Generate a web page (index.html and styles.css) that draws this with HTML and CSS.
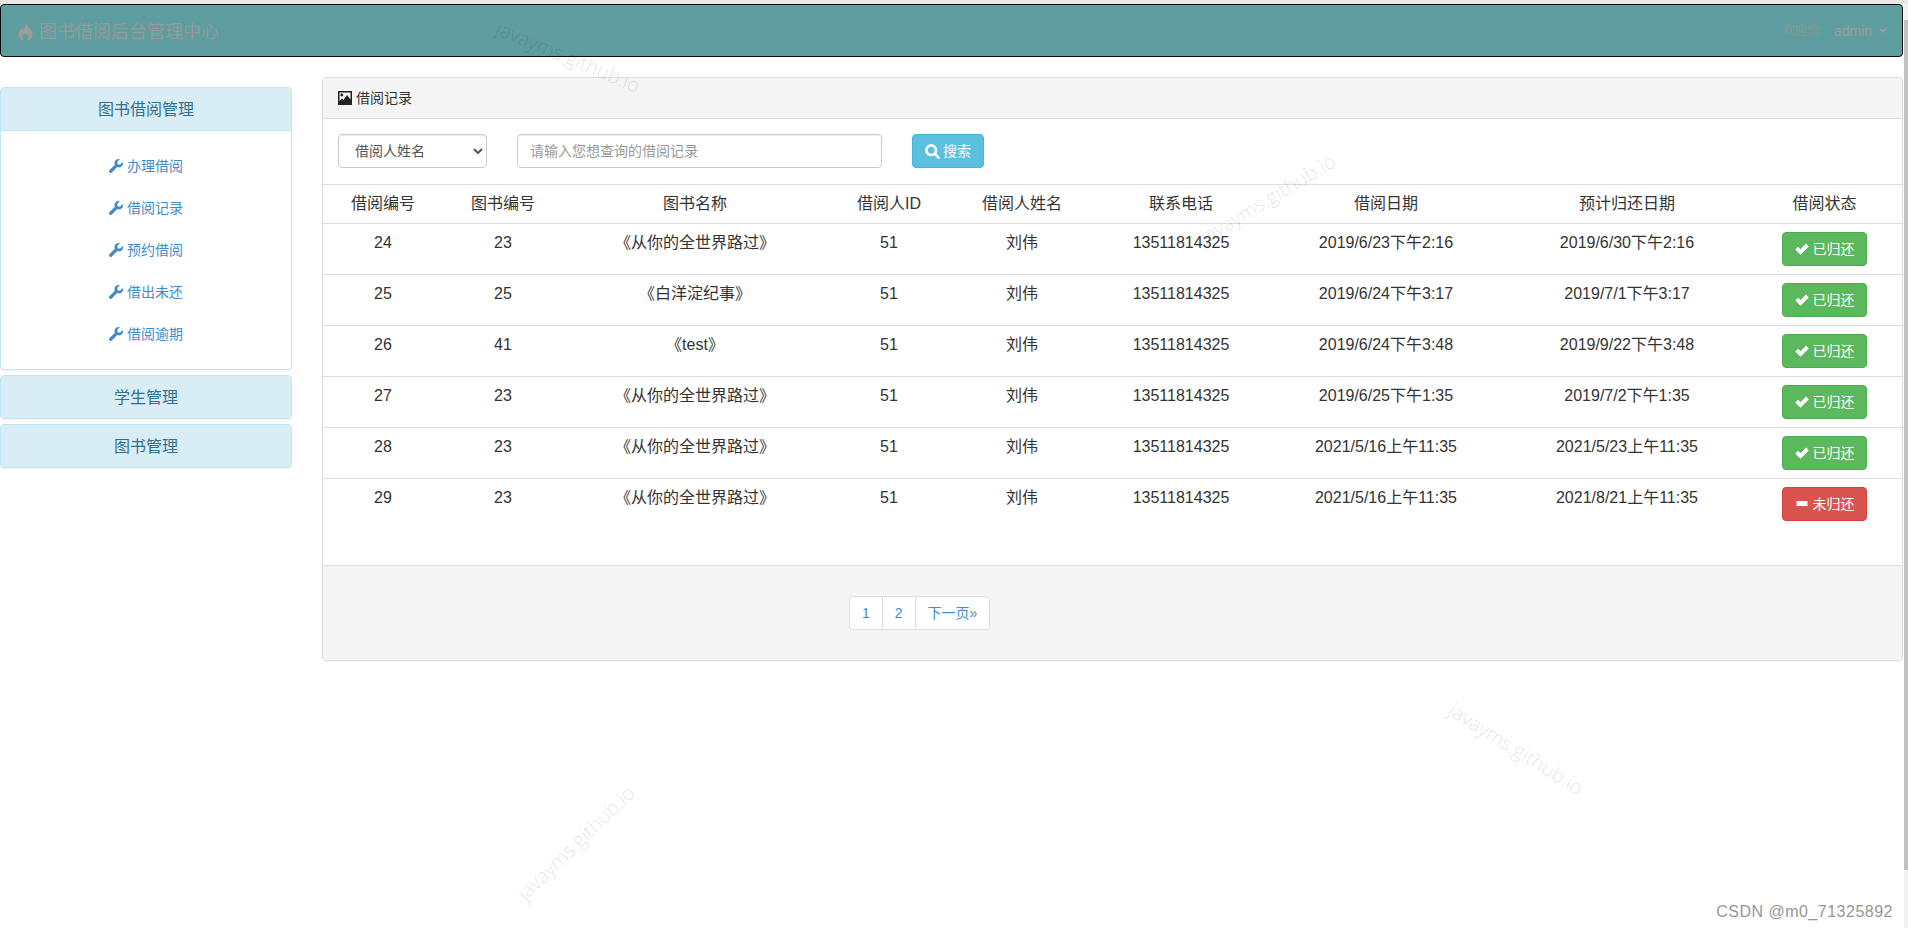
FILE: index.html
```html
<!DOCTYPE html>
<html lang="zh-CN">
<head>
<meta charset="utf-8">
<title>图书借阅后台管理中心</title>
<link rel="stylesheet" href="styles.css">
</head>
<body>
<svg class="defs" width="0" height="0" aria-hidden="true">
  <symbol id="i-wrench" viewBox="0 0 14 14"><path d="M10.9.3A4 4 0 0 0 5.9 5.8L.6 11.1a1.6 1.6 0 0 0 2.3 2.3L8.2 8.1a4 4 0 0 0 5.5-5L11.2 5.6 8.6 5.4 8.4 2.8Z"/></symbol>
  <symbol id="i-ok" viewBox="0 0 14 14"><path d="M.3 7.600 3.100 4.800 5.500 7.200 11 1.600 13.800 4.400 5.500 12.800Z"/></symbol>
  <symbol id="i-minus" viewBox="0 0 14 14"><rect x="1.500" y="4" width="11" height="5"/></symbol>
</svg>

<header class="navbar">
  <div class="brand">
    <svg class="icon-fire" viewBox="0 0 15 17"><path d="M7.500 0C8.500 3 5.800 4.400 5 6.600 4.600 5.800 4.300 5.200 4.300 4.200 2 6 .5 8.200.5 11c0 3.200 2.600 6 6 6-1.600-1-2.600-2.500-2.200-4.300.3-1.300 1.400-2.200 2-3.600.9 1.100 1 2 .9 3 .8-.5 1.100-1.300 1.200-2.100 1.500 1.800 2.200 3 1.900 4.400-.2 1.200-1 2-2 2.600 3.300 0 6.200-2.600 6.200-6 0-3-1.800-4.800-2.800-6.400-.2 1-.6 1.600-1.200 2.100C10.800 3.700 9.800 1.400 7.500 0Z"/></svg>
    <span>图书借阅后台管理中心</span>
  </div>
  <div class="user">
    <span class="welcome">欢迎您:</span>
    <span class="admin">admin</span>
    <span class="caret"></span>
  </div>
</header>

<div class="layout">
  <aside class="sidebar">
    <section class="side-panel">
      <h2 class="side-title">图书借阅管理</h2>
      <ul class="side-list">
        <li><a class="side-link" href="#"><svg class="icon-14"><use href="#i-wrench"/></svg>办理借阅</a></li>
        <li><a class="side-link" href="#"><svg class="icon-14"><use href="#i-wrench"/></svg>借阅记录</a></li>
        <li><a class="side-link" href="#"><svg class="icon-14"><use href="#i-wrench"/></svg>预约借阅</a></li>
        <li><a class="side-link" href="#"><svg class="icon-14"><use href="#i-wrench"/></svg>借出未还</a></li>
        <li><a class="side-link" href="#"><svg class="icon-14"><use href="#i-wrench"/></svg>借阅逾期</a></li>
      </ul>
    </section>
    <section class="side-panel"><h2 class="side-title side-title-solo">学生管理</h2></section>
    <section class="side-panel"><h2 class="side-title side-title-solo">图书管理</h2></section>
  </aside>

  <main class="records">
    <div class="records-head">
      <svg class="icon-picture" viewBox="0 0 14 14"><path fill-rule="evenodd" d="M0 0h14v14H0ZM1.500 1.500v8.500l2.500-2.500 1.500 1.500 3.500-5 3.500 4.500V1.500Z"/><circle cx="3.800" cy="4" r="1.400"/></svg>
      <span>借阅记录</span>
    </div>
    <form class="search-row">
      <select class="field field-select">
        <option>借阅人姓名</option>
      </select>
      <input class="field field-input" type="text" placeholder="请输入您想查询的借阅记录">
      <button class="search-btn" type="button">
        <svg class="icon-search" viewBox="0 0 14 14"><circle cx="5.800" cy="5.800" r="4.500"/><path d="M9 9l4.500 4.500"/></svg>搜索
      </button>
    </form>
    <table class="record-table">
      <colgroup>
        <col class="c1"><col class="c2"><col class="c3"><col class="c4"><col class="c5"><col class="c6"><col class="c7"><col class="c8"><col class="c9">
      </colgroup>
      <thead>
        <tr><th>借阅编号</th><th>图书编号</th><th>图书名称</th><th>借阅人ID</th><th>借阅人姓名</th><th>联系电话</th><th>借阅日期</th><th>预计归还日期</th><th class="status">借阅状态</th></tr>
      </thead>
      <tbody>
        <tr><td>24</td><td>23</td><td>《从你的全世界路过》</td><td>51</td><td>刘伟</td><td>13511814325</td><td>2019/6/23下午2:16</td><td>2019/6/30下午2:16</td><td class="status"><button class="state state-ok" type="button"><svg class="icon-14"><use href="#i-ok"/></svg>已归还</button></td></tr>
        <tr><td>25</td><td>25</td><td>《白洋淀纪事》</td><td>51</td><td>刘伟</td><td>13511814325</td><td>2019/6/24下午3:17</td><td>2019/7/1下午3:17</td><td class="status"><button class="state state-ok" type="button"><svg class="icon-14"><use href="#i-ok"/></svg>已归还</button></td></tr>
        <tr><td>26</td><td>41</td><td>《test》</td><td>51</td><td>刘伟</td><td>13511814325</td><td>2019/6/24下午3:48</td><td>2019/9/22下午3:48</td><td class="status"><button class="state state-ok" type="button"><svg class="icon-14"><use href="#i-ok"/></svg>已归还</button></td></tr>
        <tr><td>27</td><td>23</td><td>《从你的全世界路过》</td><td>51</td><td>刘伟</td><td>13511814325</td><td>2019/6/25下午1:35</td><td>2019/7/2下午1:35</td><td class="status"><button class="state state-ok" type="button"><svg class="icon-14"><use href="#i-ok"/></svg>已归还</button></td></tr>
        <tr><td>28</td><td>23</td><td>《从你的全世界路过》</td><td>51</td><td>刘伟</td><td>13511814325</td><td>2021/5/16上午11:35</td><td>2021/5/23上午11:35</td><td class="status"><button class="state state-ok" type="button"><svg class="icon-14"><use href="#i-ok"/></svg>已归还</button></td></tr>
        <tr><td>29</td><td>23</td><td>《从你的全世界路过》</td><td>51</td><td>刘伟</td><td>13511814325</td><td>2021/5/16上午11:35</td><td>2021/8/21上午11:35</td><td class="status"><button class="state state-no" type="button"><svg class="icon-14"><use href="#i-minus"/></svg>未归还</button></td></tr>
      </tbody>
    </table>
    <footer class="records-foot">
      <ul class="pager">
        <li><a href="#">1</a></li>
        <li><a href="#">2</a></li>
        <li><a href="#">下一页»</a></li>
      </ul>
    </footer>
  </main>
</div>

<span class="wm wm1">javayms.github.io</span>
<span class="wm wm2">javayms.github.io</span>
<span class="wm wm3">javayms.github.io</span>
<span class="wm wm4">javayms.github.io</span>
<span class="csdn">CSDN @m0_71325892</span>
<div class="scrollbar"><div class="thumb"></div></div>
</body>
</html>
```

FILE: styles.css
```css
* { box-sizing: border-box; }
html, body { height: 100%; }
body {
  margin: 0;
  overflow: hidden;
  position: relative;
  background: #fff;
  border-top: 4px solid #e8e8e8;
  color: #333;
  font: 14px/20px "Liberation Sans", "Noto Sans CJK SC", sans-serif;
}
a { color: #428bca; text-decoration: none; }
ul { list-style: none; margin: 0; padding: 0; }
.defs { position: absolute; }

.navbar {
  display: flex;
  justify-content: space-between;
  align-items: center;
  height: 53px;
  margin-right: 5px;
  padding: 0 15px 0 17px;
  background: #5f9ea0;
  border: 1px solid #0c0c0c;
  border-radius: 4px;
}
.brand {
  display: flex;
  align-items: center;
  gap: 6px;
  padding-top: 3px;
  font-size: 18px;
  color: #93999c;
}
.icon-fire { width: 15px; height: 18px; fill: #a09a9c; }
.user { display: flex; align-items: center; color: #9d9d9d; }
.welcome { color: #8a9696; margin-right: 12px; font-size: 12px; }
.admin { margin-right: 7px; }
.caret {
  width: 0;
  height: 0;
  border-top: 4px solid #9d9d9d;
  border-left: 4px solid transparent;
  border-right: 4px solid transparent;
}

.layout {
  display: grid;
  grid-template-columns: 292px 1fr;
  gap: 30px;
  padding-right: 5px;
}
.sidebar { display: flex; flex-direction: column; gap: 5px; padding-top: 30px; }
.side-panel {
  background: #fff;
  border: 1px solid #bce8f1;
  border-radius: 4px;
  box-shadow: 0 1px 1px rgba(0, 0, 0, .05);
  overflow: hidden;
}
.side-title {
  margin: 0;
  height: 43px;
  background: #d9edf7;
  border-bottom: 1px solid #bce8f1;
  color: #31708f;
  font-size: 16px;
  font-weight: 400;
  line-height: 44px;
  text-align: center;
}
.side-title-solo { height: 42px; border-bottom: 0; }
.side-list { padding: 14px 0; }
.side-link {
  display: flex;
  justify-content: center;
  align-items: center;
  gap: 4px;
  height: 42px;
}
.icon-14 { width: 14px; height: 14px; fill: currentColor; flex: none; }

.records {
  margin-top: 20px;
  border: 1px solid #ddd;
  border-radius: 4px;
  box-shadow: 0 1px 1px rgba(0, 0, 0, .05);
  overflow: hidden;
}
.records-head {
  display: flex;
  align-items: center;
  gap: 4px;
  height: 41px;
  padding: 0 15px;
  background: #f5f5f5;
  border-bottom: 1px solid #ddd;
}
.icon-picture { width: 14px; height: 14px; fill: #222; }
.search-row { display: flex; gap: 30px; padding: 15px 15px 16px; }
.field {
  height: 34px;
  background: #fff;
  border: 1px solid #ccc;
  border-radius: 4px;
  color: #555;
  font: inherit;
  box-shadow: inset 0 1px 1px rgba(0, 0, 0, .075);
}
.field-select { width: 149px; padding: 0 8px 0 12px; }
.field-input { width: 365px; padding: 6px 12px; }
.field-input::placeholder { color: #999; }
.search-btn {
  display: flex;
  align-items: center;
  justify-content: center;
  gap: 3px;
  width: 72px;
  height: 34px;
  padding: 0;
  background: #5bc0de;
  border: 1px solid #46b8da;
  border-radius: 4px;
  color: #fff;
  font: inherit;
}
.icon-search { width: 15px; height: 15px; fill: none; stroke: #fff; stroke-width: 2.400; }

.record-table {
  width: 100%;
  table-layout: fixed;
  border-collapse: separate;
  border-spacing: 0;
  margin-bottom: 36px;
  font-size: 16px;
}
.c1, .c2 { width: 120px; }
.c3 { width: 264px; }
.c4 { width: 124px; }
.c5 { width: 142px; }
.c6 { width: 176px; }
.c7 { width: 234px; }
.c8 { width: 248px; }
.record-table th, .record-table td {
  padding: 8px;
  border-top: 1px solid #ddd;
  text-align: center;
  vertical-align: top;
  font-weight: 400;
}
.record-table th { line-height: 22px; }
.record-table td { line-height: 22px; height: 51px; }
.record-table .status { padding-right: 12px; }
.state {
  display: flex;
  align-items: center;
  justify-content: center;
  gap: 4px;
  width: 85px;
  height: 34px;
  margin: 0 auto;
  padding: 0;
  border: 1px solid transparent;
  border-radius: 4px;
  color: #fff;
  font: 14px/20px "Liberation Sans", "Noto Sans CJK SC", sans-serif;
}
.state-ok { background: #5cb85c; border-color: #4cae4c; }
.state-no { background: #d9534f; border-color: #d43f3a; }

.records-foot {
  height: 95px;
  padding: 30px 0 0 526px;
  background: #f5f5f5;
  border-top: 1px solid #ddd;
}
.pager { display: flex; }
.pager a {
  display: block;
  margin-left: -1px;
  padding: 6px 12px;
  height: 34px;
  background: #fff;
  border: 1px solid #ddd;
}
.pager li:first-child a { margin-left: 0; border-radius: 4px 0 0 4px; }
.pager li:last-child a { border-radius: 0 4px 4px 0; }

.wm {
  position: absolute;
  color: rgba(0, 0, 0, .13);
  font: 300 20px/1 "Open Sans", sans-serif;
  white-space: nowrap;
  pointer-events: none;
}
.wm1 { left: 568px; top: 53px; transform: translate(-50%, -50%) rotate(22.700deg); }
.wm2 { left: 1268px; top: 195px; transform: translate(-50%, -50%) rotate(-31deg); }
.wm3 { left: 1516px; top: 745px; transform: translate(-50%, -50%) rotate(32deg); }
.wm4 { left: 576px; top: 839px; transform: translate(-50%, -50%) rotate(-44deg); }
.csdn {
  position: absolute;
  right: 15px;
  top: 897px;
  color: #969696;
  font-size: 16px;
  line-height: 22px;
  letter-spacing: .5px;
}
.scrollbar {
  position: absolute;
  top: 0;
  right: 0;
  bottom: 0;
  width: 4px;
  background: #f1f1f1;
}
.thumb { margin-top: 16px; height: 850px; background: #c1c1c1; }
```
